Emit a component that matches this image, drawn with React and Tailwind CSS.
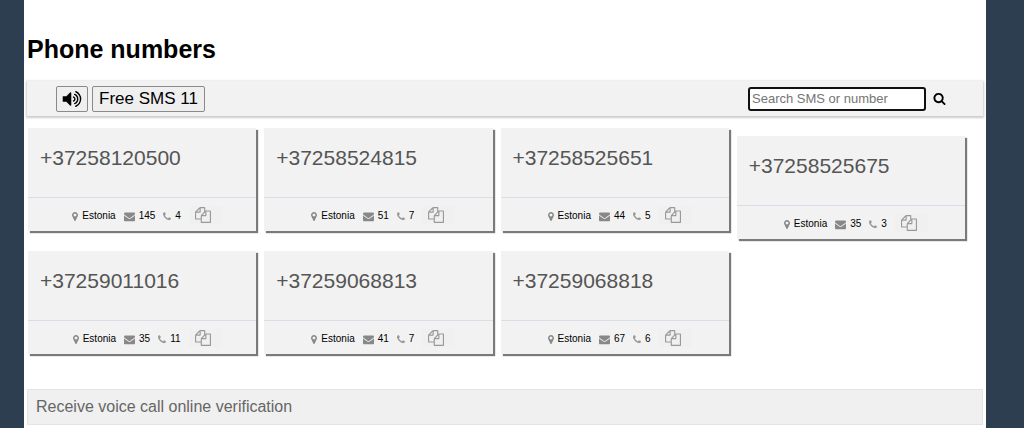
import React, { useState } from 'react';

const ICONS = {
    volume: "M832 352v1088q0 26-19 45t-45 19-45-19l-333-333h-262q-26 0-45-19t-19-45v-384q0-26 19-45t45-19h262l333-333q19-19 45-19t45 19 19 45zm384 544q0 76-42.5 141.5t-112.5 93.5q-10 5-25 5-26 0-45-18.5t-19-45.5q0-21 12-35.5t29-25 34-23 29-36 12-56.5-12-56.5-29-36-34-23-29-25-12-35.5q0-27 19-45.5t45-18.5q15 0 25 5 70 27 112.5 93t42.5 142zm256 0q0 153-85 282.5t-225 188.5q-13 5-25 5-27 0-46-19t-19-45q0-39 39-59 56-29 76-44 74-54 115.5-135.5t41.5-173.5-41.5-173.5-115.5-135.5q-20-15-76-44-39-20-39-59 0-26 19-45t45-19q13 0 26 5 140 59 225 188.5t85 282.5zm256 0q0 230-127 422.5t-338 283.5q-13 5-26 5-26 0-45-19t-19-45q0-36 39-59 7-4 22.5-10.5t22.5-10.5q46-25 82-51 123-91 192-227t69-289-69-289-192-227q-36-26-82-51-7-4-22.5-10.5t-22.5-10.5q-39-23-39-59 0-26 19-45t45-19q13 0 26 5 211 91 338 283.5t127 422.5z",
    search: "M1216 832q0-185-131.5-316.5t-316.5-131.5-316.5 131.5-131.5 316.5 131.5 316.5 316.5 131.5 316.5-131.5 131.5-316.5zm512 832q0 52-38 90t-90 38q-54 0-90-38l-343-342q-179 124-399 124-143 0-273.5-55.5t-225-150-150-225-55.5-273.5 55.5-273.5 150-225 225-150 273.5-55.5 273.5 55.5 225 150 150 225 55.5 273.5q0 220-124 399l343 343q37 37 37 90z",
    marker: "M1152 640q0-106-75-181t-181-75-181 75-75 181 75 181 181 75 181-75 75-181zm256 0q0 109-33 179l-364 774q-16 33-47.5 52t-67.5 19-67.5-19-46.5-52l-365-774q-33-70-33-179 0-212 150-362t362-150 362 150 150 362z",
    envelope: "M1792 710v794q0 66-47 113t-113 47h-1472q-66 0-113-47t-47-113v-794q44 49 101 87 362 246 497 345 57 42 92.5 65.5t94.5 48 110 24.5h2q51 0 110-24.5t94.5-48 92.5-65.5q170-123 498-345 57-39 100-87zm0-294q0 79-49 151t-122 123q-376 261-468 325-10 7-42.5 31t-54 38.5-52 32.5-57.5 27-50 9h-2q-23 0-50-9t-57.5-27-52-32.5-54-38.5-42.5-31q-91-64-262-182.5t-205-142.5q-62-42-117-115.5t-55-136.5q0-78 41.5-130t118.5-52h1472q65 0 112.5 47t47.5 113z",
    phone: "M1600 1240q0 27-10 70.5t-21 68.5q-21 50-122 106-94 51-186 51-27 0-53-3.5t-57.5-12.5-47-14.5-55.5-20.5-49-18q-98-35-175-83-127-79-264-216t-216-264q-48-77-83-175-3-9-18-49t-20.5-55.5-14.5-47-12.5-57.5-3.5-53q0-92 51-186 56-101 106-122 25-11 68.5-21t70.5-10q14 0 21 3 18 6 53 76 11 19 30 54t35 63.5 31 53.5q3 4 17.5 25t21.5 35.5 7 28.5q0 20-28.5 50t-62 55-62 53-28.5 46q0 9 5 22.5t8.5 20.5 14 24 11.5 19q76 137 174 235t235 174q2 1 19 11.5t24 14 20.5 8.5 22.5 5q18 0 46-28.5t53-62 55-62 50-28.5q14 0 28.5 7t35.5 21.5 25 17.5q25 15 53.5 31t63.5 35 54 30q70 35 76 53 3 7 3 21z",
    copy: "M1696 384q40 0 68 28t28 68v1216q0 40-28 68t-68 28h-960q-40 0-68-28t-28-68v-288h-544q-40 0-68-28t-28-68v-672q0-40 20-88t48-76l408-408q28-28 76-48t88-20h416q40 0 68 28t28 68v328q68-40 128-40h416zm-544 213l-299 299h299v-299zm-640-384l-299 299h299v-299zm196 647l316-316v-416h-384v416q0 40-28 68t-68 28h-416v640h512v-256q0-40 20-88t48-76zm956 804v-1152h-384v416q0 40-28 68t-68 28h-416v640h896z",
};

const numbers = [
    { phone: '+37258120500', country: 'Estonia', sms: 145, calls: 4 },
    { phone: '+37258524815', country: 'Estonia', sms: 51, calls: 7 },
    { phone: '+37258525651', country: 'Estonia', sms: 44, calls: 5 },
    { phone: '+37258525675', country: 'Estonia', sms: 35, calls: 3 },
    { phone: '+37259011016', country: 'Estonia', sms: 35, calls: 11 },
    { phone: '+37259068813', country: 'Estonia', sms: 41, calls: 7 },
    { phone: '+37259068818', country: 'Estonia', sms: 67, calls: 6 },
];

// viewBox can be narrowed for glyphs that don't fill the square
const Icon = ({ name, className, viewBox = "0 0 1792 1792" }) => (
    <svg viewBox={viewBox} fill="currentColor" aria-hidden="true" className={className}>
        <path d={ICONS[name]} />
    </svg>
);

const NumberCard = ({ item }) => (
    <li className="bg-[#f2f2f2] shadow-[2px_2px_1px_#7a7a7a] lg:nth-[4]:mt-2">
        <div className="h-[70px] border-b border-[#dadde8] px-3 pt-4">
            <a href="#number" className="text-[21px] leading-7 text-[#555]">{item.phone}</a>
        </div>
        <div className="flex h-[33px] items-center justify-center gap-2 pl-[10px] text-[10px] leading-4 text-black">
            <span className="flex items-center gap-1 pt-[3px]">
                <Icon name="marker" viewBox="384 0 1024 1792" className="h-[11px] w-[6px] text-[#888]" />
                {item.country}
            </span>
            <span className="flex items-center gap-1 pt-[3px]">
                <Icon name="envelope" className="size-[11px] text-[#888]" />
                {item.sms}
            </span>
            <span className="flex items-center gap-1 pt-[3px]">
                <Icon name="phone" viewBox="192 0 1408 1792" className="h-[11px] w-2 text-[#999]" />
                {item.calls}
            </span>
            <button type="button" aria-label="Copy number" className="h-[18px] w-[33px] bg-[#f0f0f0] pl-[6px] text-[#999]">
                <Icon name="copy" className="size-4" />
            </button>
        </div>
    </li>
);

const App = () => {
    const [query, setQuery] = useState('');

    return (
        <div className="min-h-screen bg-[#2c3e50] pr-[38px] pl-6 font-['Liberation_Sans',Arial,sans-serif]">
            <main className="min-h-screen bg-white pt-[33px] pr-[3px] pb-[3px] pl-[3px]">
                <h1 className="text-[25px] leading-8 font-bold text-black">Phone numbers</h1>

                {/* Toolbar */}
                <div className="mt-4 flex h-[35px] items-center justify-between bg-[#f2f2f2] pr-[37px] pl-[29px] shadow-[0_1px_2px_1px_#ccc]">
                    <div className="flex gap-1">
                        <button type="button" aria-label="Sound" className="flex h-[26px] w-8 items-center justify-center rounded-[2px] border border-[#8a8a8a] bg-[#efefef]">
                            <Icon name="volume" className="size-5" />
                        </button>
                        <button type="button" className="h-[26px] rounded-[2px] border border-[#8a8a8a] bg-[#efefef] px-1.5 text-[17px] leading-6 text-black">Free SMS 11</button>
                    </div>
                    <form className="flex items-center gap-[7px]" onSubmit={(e) => e.preventDefault()}>
                        <input
                            type="text"
                            aria-label="Search SMS or number"
                            placeholder="Search SMS or number"
                            value={query}
                            onChange={(e) => setQuery(e.target.value)}
                            autoFocus
                            className="h-6 w-[178px] rounded-[3px] border-2 border-[#101010] bg-white px-0.5 text-[13px] text-black outline-none placeholder:text-[#757575]"
                        />
                        <button type="submit" aria-label="Search">
                            <Icon name="search" className="size-[13px]" />
                        </button>
                    </form>
                </div>

                <ul className="mt-3 grid grid-cols-2 items-start gap-x-2 gap-y-5 pr-[18px] pl-px lg:grid-cols-4 lg:gap-y-3">
                    {numbers.map(item => <NumberCard key={item.phone} item={item} />)}
                </ul>

                <h2 className="mt-[35px] border border-[#e4e4e4] bg-[#f0f0f0] px-2 py-[5px] text-[16px] leading-6 text-[#666]">
                    Receive voice call online verification
                </h2>
            </main>
        </div>
    );
};

export default App;
